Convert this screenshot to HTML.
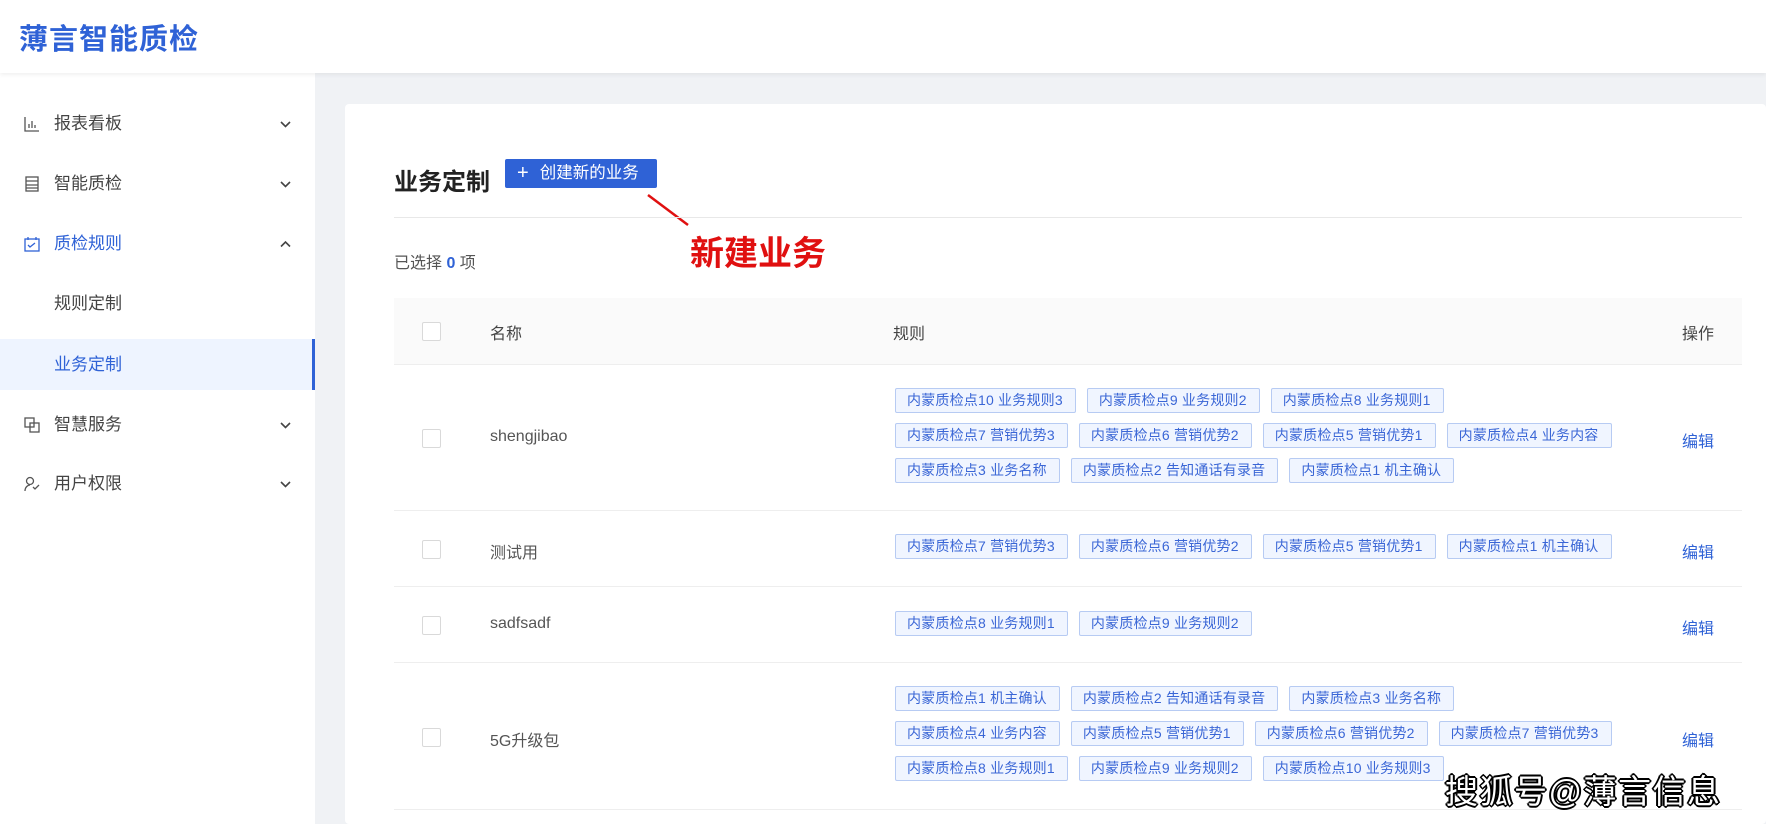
<!DOCTYPE html>
<html><head><meta charset="utf-8"><style>
*{margin:0;padding:0;box-sizing:border-box}
body{width:1766px;height:824px;overflow:hidden;background:#f0f2f5;font-family:"Liberation Sans","Noto Sans CJK SC",sans-serif;color:#333;position:relative}
.hdr{position:absolute;left:0;top:0;width:1766px;height:73px;background:#fff;box-shadow:0 2px 4px rgba(0,0,0,.06);z-index:2}
.logo{position:absolute;left:19px;top:16px;font-size:29px;font-weight:bold;color:#2f62d6;letter-spacing:1px}
.side{position:absolute;left:0;top:73px;width:315px;height:751px;background:#fff}
.mi{position:absolute;left:0;width:315px;height:60px;line-height:60px;font-size:17px;color:#444}
.mi .ic{position:absolute;left:24px;top:22px;width:16px;height:16px}
.mi .t{position:absolute;left:54px}
.mi .ar{position:absolute;left:280px;top:26px;width:11px;height:8px}
.act{background:#eef4ff;color:#2f62d6;border-right:3px solid #2f62d6}
.card{position:absolute;left:345px;top:104px;width:1421px;height:720px;background:#fff;border-radius:4px}
.title{position:absolute;left:394px;top:162px;font-size:24px;font-weight:bold;color:#222}
.btn{position:absolute;left:505px;top:159px;width:152px;height:29px;background:#2f62d6;color:#fff;font-size:16.5px;line-height:29px;padding-left:12px;border-radius:2px;white-space:nowrap}
.btn b{font-weight:normal;font-size:20px;margin-right:11px;vertical-align:-1px}
.div{position:absolute;left:394px;top:217px;width:1348px;height:1px;background:#e8e8e8}
.sel{position:absolute;left:394px;top:249px;font-size:16px;color:#555}
.sel span{color:#2f62d6;font-weight:bold}
.th{position:absolute;left:394px;top:298px;width:1348px;height:67px;background:#fafafa;border-bottom:1px solid #eee}
.cb{position:absolute;width:19px;height:19px;border:1px solid #d9d9d9;border-radius:2px;background:#fff}
.row{position:absolute;left:394px;width:1348px;border-bottom:1px solid #eee}
.txt{position:absolute;font-size:16px;color:#555}
.ed{position:absolute;font-size:16px;color:#2f62d6}
.tl{position:absolute;left:895px;display:flex;gap:11px;white-space:nowrap}
.tag{height:25px;line-height:23px;font-size:14px;color:#3a66d6;background:#f0f5ff;border:1px solid #b7cbf3;padding:0 12px 0 11px;border-radius:2px;white-space:nowrap;letter-spacing:0.2px}
.wm{position:absolute;left:1445px;top:765px;font-size:33px;color:#fff;text-shadow:-2px 0 #000,2px 0 #000,0 -2px #000,0 2px #000,1px 1px #000,-1px -1px #000,1px -1px #000,-1px 1px #000;letter-spacing:1.5px}
</style></head><body>
<div class="hdr"><div class="logo">薄言智能质检</div></div>
<div class="side">
<div class="mi" style="top:21px"><svg class="ic" viewBox="0 0 16 16" fill="none" stroke="#555" stroke-width="1.3"><path d="M1 1v14h14M5 12V8M8 12V5M11 12V9"/></svg><span class="t">报表看板</span><svg class="ar" viewBox="0 0 11 8" fill="none" stroke="#444" stroke-width="1.6"><path d="M1 2l4.5 4.5L10 2"/></svg></div>
<div class="mi" style="top:81px"><svg class="ic" viewBox="0 0 16 16" fill="none" stroke="#555" stroke-width="1.3"><rect x="2" y="1" width="12" height="14"/><path d="M2 5h12M2 9h12M2 12h12"/></svg><span class="t">智能质检</span><svg class="ar" viewBox="0 0 11 8" fill="none" stroke="#444" stroke-width="1.6"><path d="M1 2l4.5 4.5L10 2"/></svg></div>
<div class="mi" style="top:141px;color:#2f62d6"><svg class="ic" viewBox="0 0 16 16" fill="none" stroke="#2f62d6" stroke-width="1.3"><rect x="1" y="3" width="14" height="12"/><path d="M4 1v3M12 1v3M4 9l2 2 5-4"/></svg><span class="t">质检规则</span><svg class="ar" viewBox="0 0 11 8" fill="none" stroke="#444" stroke-width="1.6"><path d="M1 6.5L5.5 2 10 6.5"/></svg></div>
<div class="mi" style="top:201px"><span class="t">规则定制</span></div>
<div class="mi act" style="top:266px;height:51px;line-height:51px"><span class="t">业务定制</span></div>
<div class="mi" style="top:322px"><svg class="ic" viewBox="0 0 16 16" fill="none" stroke="#555" stroke-width="1.3"><rect x="1" y="1" width="9" height="9"/><rect x="6" y="6" width="9" height="9"/></svg><span class="t">智慧服务</span><svg class="ar" viewBox="0 0 11 8" fill="none" stroke="#444" stroke-width="1.6"><path d="M1 2l4.5 4.5L10 2"/></svg></div>
<div class="mi" style="top:381px"><svg class="ic" viewBox="0 0 16 16" fill="none" stroke="#555" stroke-width="1.3"><circle cx="6" cy="5" r="3.5"/><path d="M1 15c0-4 3-6 5-6M9 11l2 2 4-4"/></svg><span class="t">用户权限</span><svg class="ar" viewBox="0 0 11 8" fill="none" stroke="#444" stroke-width="1.6"><path d="M1 2l4.5 4.5L10 2"/></svg></div>
</div>
<div class="card"></div>
<div class="title">业务定制</div>
<div class="btn"><b>+</b>创建新的业务</div>
<svg style="position:absolute;left:0;top:0" width="1766" height="824"><line x1="648" y1="195" x2="688" y2="225" stroke="#e01010" stroke-width="2.5"/></svg>
<div style="position:absolute;left:690px;top:226px;font-size:34px;font-weight:bold;color:#e01010">新建业务</div>
<div class="div"></div>
<div class="sel">已选择 <span>0</span> 项</div>
<div class="th"><div class="cb" style="left:28px;top:24px"></div><div class="txt" style="left:96px;top:22px;color:#444">名称</div><div class="txt" style="left:499px;top:22px;color:#444">规则</div><div class="txt" style="left:1288px;top:22px;color:#444">操作</div></div>

<div class="row" style="top:365px;height:146px"><div class="cb" style="left:28px;top:64px"></div><div class="txt" style="left:96px;top:63px">shengjibao</div><div class="ed" style="left:1288px;top:63px">编辑</div></div>
<div class="tl" style="top:388px"><span class="tag">内蒙质检点10 业务规则3</span><span class="tag">内蒙质检点9 业务规则2</span><span class="tag">内蒙质检点8 业务规则1</span></div>
<div class="tl" style="top:423px"><span class="tag">内蒙质检点7 营销优势3</span><span class="tag">内蒙质检点6 营销优势2</span><span class="tag">内蒙质检点5 营销优势1</span><span class="tag">内蒙质检点4 业务内容</span></div>
<div class="tl" style="top:458px"><span class="tag">内蒙质检点3 业务名称</span><span class="tag">内蒙质检点2 告知通话有录音</span><span class="tag">内蒙质检点1 机主确认</span></div>

<div class="row" style="top:511px;height:76px"><div class="cb" style="left:28px;top:29px"></div><div class="txt" style="left:96px;top:28px">测试用</div><div class="ed" style="left:1288px;top:28px">编辑</div></div>
<div class="tl" style="top:534px"><span class="tag">内蒙质检点7 营销优势3</span><span class="tag">内蒙质检点6 营销优势2</span><span class="tag">内蒙质检点5 营销优势1</span><span class="tag">内蒙质检点1 机主确认</span></div>

<div class="row" style="top:587px;height:76px"><div class="cb" style="left:28px;top:29px"></div><div class="txt" style="left:96px;top:28px">sadfsadf</div><div class="ed" style="left:1288px;top:28px">编辑</div></div>
<div class="tl" style="top:611px"><span class="tag">内蒙质检点8 业务规则1</span><span class="tag">内蒙质检点9 业务规则2</span></div>

<div class="row" style="top:663px;height:147px"><div class="cb" style="left:28px;top:65px"></div><div class="txt" style="left:96px;top:64px">5G升级包</div><div class="ed" style="left:1288px;top:64px">编辑</div></div>
<div class="tl" style="top:686px"><span class="tag">内蒙质检点1 机主确认</span><span class="tag">内蒙质检点2 告知通话有录音</span><span class="tag">内蒙质检点3 业务名称</span></div>
<div class="tl" style="top:721px"><span class="tag">内蒙质检点4 业务内容</span><span class="tag">内蒙质检点5 营销优势1</span><span class="tag">内蒙质检点6 营销优势2</span><span class="tag">内蒙质检点7 营销优势3</span></div>
<div class="tl" style="top:756px"><span class="tag">内蒙质检点8 业务规则1</span><span class="tag">内蒙质检点9 业务规则2</span><span class="tag">内蒙质检点10 业务规则3</span></div>

<div class="wm">搜狐号@薄言信息</div>
</body></html>
